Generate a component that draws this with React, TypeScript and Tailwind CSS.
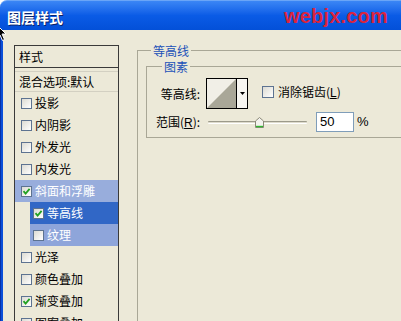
import type { ReactNode } from "react";

const cjk = { fontFamily: '"Noto Sans CJK SC", "Liberation Sans", sans-serif' };

function Check({ on = false, size = 11 }: { on?: boolean; size?: number }) {
  return (
    <span
      className="flex items-center justify-center border border-[#5d7391] bg-gradient-to-br from-[#dcdbd3] to-white shrink-0"
      style={{ width: size, height: size }}
    >
      {on && (
        <svg width="9" height="9" viewBox="0 0 9 9">
          <path d="M1.5 4.2 L3.6 6.6 L7.6 1.8" fill="none" stroke="#21a121" strokeWidth="1.8" />
        </svg>
      )}
    </span>
  );
}

type Row = { label: string; on?: boolean; sub?: boolean; tone?: "light" | "dark" | "mid" };

const rows: Row[] = [
  { label: "投影" },
  { label: "内阴影" },
  { label: "外发光" },
  { label: "内发光" },
  { label: "斜面和浮雕", on: true, tone: "light" },
  { label: "等高线", on: true, sub: true, tone: "dark" },
  { label: "纹理", sub: true, tone: "mid" },
  { label: "光泽" },
  { label: "颜色叠加" },
  { label: "渐变叠加", on: true },
  { label: "图案叠加" },
];

function StyleRow({ row }: { row: Row }) {
  const bg =
    row.tone === "light"
      ? "bg-[#98addc] text-white"
      : row.tone === "dark"
      ? "bg-[#3167c6] text-white"
      : row.tone === "mid"
      ? "bg-[#8ea5da] text-white"
      : "text-black";
  return (
    <div className={`h-[22px] shrink-0 flex items-center gap-[2px] ${row.sub ? "ml-[15px] pl-[3px]" : "pl-[6px]"} ${bg}`}>
      <Check on={row.on} />
      <span className="text-[12px] leading-[16px] ml-[1px]">{row.label}</span>
    </div>
  );
}

function Group({ title, titleLeft, children, className }: { title: string; titleLeft: string; children: ReactNode; className?: string }) {
  return (
    <div className={`relative border-l border-t border-[#a9a796] ${className ?? ""}`}>
      <span className={`absolute -top-[8px] ${titleLeft} bg-[#ece9d8] px-[2px] text-[12px] leading-[16px] text-[#2151b8]`}>
        {title}
      </span>
      {children}
    </div>
  );
}

export default function App() {
  return (
    <div className="relative w-[401px] h-[321px] overflow-hidden bg-white flex flex-col" style={cjk}>
      {/* title bar */}
      <div className="h-[30px] rounded-tl-[7px] bg-gradient-to-b from-[#3b86f5] via-[#0a5be6] to-[#0350d8] flex items-center justify-between pl-[7px] pr-[13px] shrink-0 border-t border-[#6aa5f7]">
        <span className="text-white font-bold text-[14px] leading-[16px] mt-[3px] [text-shadow:1px_1px_0_#0a246a]">图层样式</span>
        <span
          className="font-bold text-[20px] leading-[20px] text-[#d9243e] tracking-[0.2px]"
          style={{ fontFamily: '"Liberation Sans", Arial, sans-serif' }}
        >
          webjx.com
        </span>
      </div>

      <div className="flex flex-1 min-h-0">
        <div className="w-[3px] bg-[#0b4fd9] border-l border-[#0831a6] shrink-0" />
        <div className="flex-1 bg-[#ece9d8] flex pl-[11px] pt-[15px]">
          {/* styles list */}
          <div className="w-[105px] shrink-0 border-l border-t border-r border-[#3a3a3a] flex flex-col overflow-hidden">
            <div className="h-[22px] shrink-0 flex items-center pl-[4px] text-[12px] leading-[16px] border-b border-[#3a3a3a]">样式</div>
            <div className="mt-[3px] shrink-0 border-t border-[#3a3a3a] h-[21px] flex items-center pl-[4px] text-[12px] leading-[16px] border-b border-[#d3d0c2]">
              混合选项:默认
            </div>
            {rows.map((r) => (
              <StyleRow key={r.label} row={r} />
            ))}
          </div>

          {/* right side */}
          <div className="flex-1 ml-[18px] pt-[5px]">
            <Group title="等高线" titleLeft="left-[13px]" className="h-full">
              <Group title="图素" titleLeft="left-[15px]" className="ml-[8px] mt-[15px] border-b">
                <div className="flex items-center pt-[11px] text-[12px] leading-[16px]">
                  <span className="w-[53px] text-right">等高线:</span>
                  <div className="ml-[6px] w-[42px] h-[31px] border border-black flex bg-[#f1efe7]">
                    <svg width="29" height="29" viewBox="0 0 29 29" className="shrink-0">
                      <polygon points="0,29 29,0 29,29" fill="#a9a798" />
                    </svg>
                    <div className="w-[11px] border-l border-black flex items-center justify-center bg-[#f7f6f1]">
                      <svg width="5" height="3" viewBox="0 0 5 3">
                        <polygon points="0,0 5,0 2.5,3" fill="#000" />
                      </svg>
                    </div>
                  </div>
                  <div className="ml-[14px] mb-[3px] flex items-center gap-[4px]">
                    <Check size={12} />
                    <span>
                      消除锯齿(<span className="underline" style={{ fontFamily: '"Liberation Sans", sans-serif' }}>L</span>)
                    </span>
                  </div>
                </div>
                <div className="flex items-center mt-[3px] mb-[5px] h-[20px] text-[12px] leading-[16px]">
                  <span className="w-[54px] pl-[9px]">
                    范围(<span className="underline" style={{ fontFamily: '"Liberation Sans", sans-serif' }}>R</span>):
                  </span>
                  <div className="relative ml-[7px] w-[99px] h-[12px] flex items-center">
                    <div className="w-full h-[3px] border-t border-[#9c9a8a] border-b border-b-white bg-[#dedbcc] rounded-[1px]" />
                    <svg width="9" height="11" viewBox="0 0 9 11" className="absolute left-[47px] top-[1px]">
                      <path d="M0.5 10.5 V4 L4.5 0.5 L8.5 4 V10.5 Z" fill="#f4f3ee" stroke="#8a8878" />
                      <path d="M1 9.5 H8" stroke="#2fb62f" strokeWidth="1.4" />
                    </svg>
                  </div>
                  <div
                    className="ml-[9px] w-[38px] h-[20px] border border-[#7f9db9] bg-white flex items-center pl-[3px] text-[13px]"
                    style={{ fontFamily: '"Liberation Sans", Arial, sans-serif' }}
                  >
                    50
                  </div>
                  <span className="ml-[3px] text-[13px]" style={{ fontFamily: '"Liberation Sans", Arial, sans-serif' }}>%</span>
                </div>
              </Group>
            </Group>
          </div>
        </div>
      </div>

      {/* mouse pointer */}
      <svg width="12" height="18" viewBox="0 0 12 18" className="absolute left-[-4px] top-[24px]">
        <path d="M1 1 V14 L4 11 L6.5 16.5 L8.5 15.5 L6 10 H10 Z" fill="#000" stroke="#fff" strokeWidth="1" />
      </svg>
    </div>
  );
}
